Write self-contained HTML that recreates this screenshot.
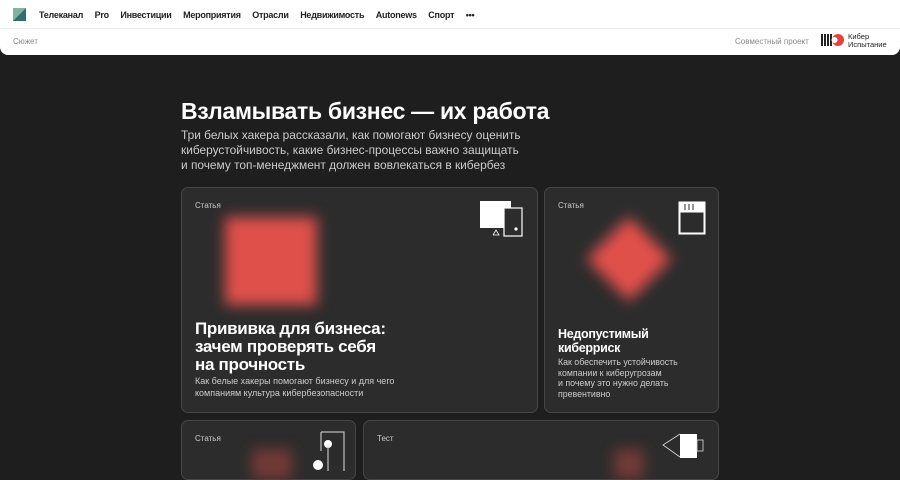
<!DOCTYPE html>
<html><head><meta charset="utf-8"><style>
*{margin:0;padding:0;box-sizing:border-box}
body{width:900px;height:458px;overflow:hidden;background:#1e1e1e;font-family:"Liberation Sans",sans-serif;position:relative}
.hdr{position:absolute;left:0;top:0;width:900px;height:55px;background:#fff;border-radius:0 0 8px 8px}
.nav{position:absolute;top:10px;left:39px;font-size:9px;font-weight:bold;color:#222;white-space:nowrap;letter-spacing:-0.25px}
.nav span{margin-right:11.5px}
.line{position:absolute;left:0;right:0;top:28px;border-top:1px solid #eee}
.a{position:absolute}
.card{position:absolute;background:#2c2c2c;border:1px solid #464646;border-radius:7px;overflow:hidden}
.lbl{position:absolute;left:13px;top:13px;font-size:8px;color:#ccc}
.blur{position:absolute;background:#e0504a;filter:blur(7px)}
h2{position:absolute;color:#fff;font-weight:bold;letter-spacing:-0.3px;white-space:nowrap}
p.s{position:absolute;color:#ccc;font-size:9px;line-height:11.5px;white-space:nowrap}
</style></head><body>
<div class="hdr">
 <svg class="a" style="left:13px;top:8px" width="13" height="13"><rect width="13" height="13" fill="#7fb39e"/><polygon points="13,0 13,13 0,13" fill="#2f6f74"/></svg>
 <div class="nav"><span>Телеканал</span><span>Pro</span><span>Инвестиции</span><span>Мероприятия</span><span>Отрасли</span><span>Недвижимость</span><span>Autonews</span><span>Спорт</span><span>•••</span></div>
 <div class="line"></div>
 <div class="a" style="left:13px;top:37px;font-size:8px;color:#888">Сюжет</div>
 <div class="a" style="left:735px;top:37px;font-size:8px;color:#888">Совместный проект</div>
 <svg class="a" style="left:821px;top:33px" width="24" height="14"><rect x="0" y="1" width="2" height="12" fill="#222"/><rect x="3" y="1" width="2" height="12" fill="#222"/><rect x="6" y="1" width="2" height="12" fill="#222"/><rect x="9" y="1" width="2" height="12" fill="#222"/><circle cx="17" cy="7" r="6" fill="#e8403a"/><circle cx="13.5" cy="7" r="3" fill="#fff"/></svg>
 <div class="a" style="left:848px;top:33px;font-size:7.5px;line-height:8px;color:#222">Кибер<br>Испытание</div>
</div>
<h2 style="left:181px;top:98px;font-size:23px">Взламывать бизнес — их работа</h2>
<div class="a" style="left:181px;top:128px;font-size:11.9px;line-height:15px;color:#ccc;white-space:nowrap">Три белых хакера рассказали, как помогают бизнесу оценить<br>киберустойчивость, какие бизнес-процессы важно защищать<br>и почему топ-менеджмент должен вовлекаться в кибербез</div>

<div class="card" style="left:181px;top:187px;width:357px;height:226px">
 <div class="lbl">Статья</div>
 <div class="blur" style="left:43px;top:29px;width:92px;height:88px"></div>
 <svg class="a" style="left:297px;top:12px" width="48" height="38"><rect x="1" y="1" width="31" height="27" fill="#fff"/><rect x="25" y="8" width="18" height="28" fill="#2c2c2c" stroke="#fff" stroke-width="1.2"/><circle cx="37" cy="29" r="1.6" fill="#fff"/><polyline points="14,35 17,30 20,35 14,35" fill="none" stroke="#fff" stroke-width="0.8"/></svg>
 <h2 style="left:13px;top:132px;font-size:17px;line-height:18px">Прививка для бизнеса:<br>зачем проверять себя<br>на прочность</h2>
 <p class="s" style="left:13px;top:188px">Как белые хакеры помогают бизнесу и для чего<br>компаниям культура кибербезопасности</p>
</div>
<div class="card" style="left:544px;top:187px;width:175px;height:226px">
 <div class="lbl">Статья</div>
 <div class="blur" style="left:54px;top:41px;width:60px;height:60px;transform:rotate(45deg)"></div>
 <svg class="a" style="left:133px;top:13px" width="30" height="36"><rect x="1.5" y="1.5" width="25" height="31" fill="none" stroke="#fff" stroke-width="2"/><rect x="1.5" y="1.5" width="25" height="10" fill="#fff"/><g stroke="#2c2c2c" stroke-width="1"><line x1="7" y1="3" x2="7" y2="9"/><line x1="11" y1="3" x2="11" y2="9"/><line x1="15" y1="3" x2="15" y2="9"/></g></svg>
 <h2 style="left:13px;top:139px;font-size:12.5px;line-height:14px">Недопустимый<br>киберриск</h2>
 <p class="s" style="left:13px;top:169px;font-size:8.8px;line-height:10.5px">Как обеспечить устойчивость<br>компании к киберугрозам<br>и почему это нужно делать<br>превентивно</p>
</div>
<div class="card" style="left:181px;top:420px;width:175px;height:60px">
 <div class="lbl">Статья</div>
 <div class="blur" style="left:70px;top:28px;width:40px;height:30px;opacity:.4"></div>
 <svg class="a" style="left:130px;top:10px" width="36" height="40"><polyline points="9,1 32,1 32,40" fill="none" stroke="#ddd" stroke-width="1"/><line x1="9" y1="1" x2="9" y2="20" stroke="#ddd"/><circle cx="16" cy="13" r="4" fill="#fff"/><line x1="16" y1="13" x2="16" y2="40" stroke="#ddd"/><circle cx="6" cy="34" r="5" fill="#fff"/></svg>
</div>
<div class="card" style="left:363px;top:420px;width:356px;height:60px">
 <div class="lbl">Тест</div>
 <div class="blur" style="left:250px;top:28px;width:30px;height:30px;opacity:.4"></div>
 <svg class="a" style="left:298px;top:12px" width="50" height="34"><polyline points="18,1 1,12 18,24" fill="none" stroke="#ddd" stroke-width="0.8"/><rect x="18" y="1" width="17" height="24" fill="#fff"/><rect x="35" y="7" width="6" height="11" fill="none" stroke="#ddd" stroke-width="0.8"/></svg>
</div>
</body></html>
